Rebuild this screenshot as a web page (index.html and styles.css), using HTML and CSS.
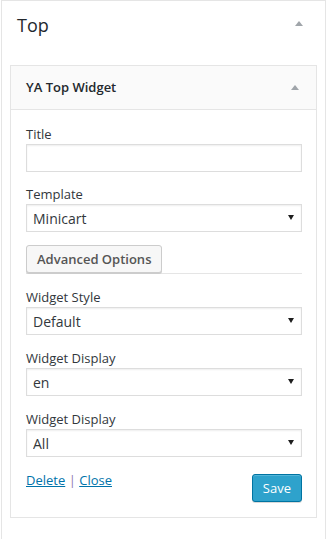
FILE: index.html
```
<!DOCTYPE html>
<html lang="en">
<head>
  <meta charset="UTF-8" />
  <title>Widgets | Top</title>
  <meta name="viewport" content="width=device-width, initial-scale=1.0" />
  <link rel="stylesheet" href="styles.css">
</head>
<body>

  <!-- Sidebar area -->
  <div class="sidebar">
    <div class="sidebar-head">
      <h2>Top</h2>
      <span class="toggle"></span>
    </div>

    <!-- Widget -->
    <div class="widget">
      <div class="widget-top">
        <h3>YA Top Widget</h3>
        <span class="toggle"></span>
      </div>

      <div class="widget-inside">
        <div class="field">
          <label for="title">Title</label>
          <input type="text" id="title" />
        </div>

        <div class="field">
          <label for="template">Template</label>
          <div class="select-wrap">
            <select id="template">
              <option>Minicart</option>
            </select>
          </div>
        </div>

        <div class="advanced">
          <button class="button">Advanced Options</button>
        </div>

        <div class="field">
          <label for="style">Widget Style</label>
          <div class="select-wrap">
            <select id="style">
              <option>Default</option>
            </select>
          </div>
        </div>

        <div class="field">
          <label for="lang">Widget Display</label>
          <div class="select-wrap">
            <select id="lang">
              <option>en</option>
            </select>
          </div>
        </div>

        <div class="field">
          <label for="display">Widget Display</label>
          <div class="select-wrap">
            <select id="display">
              <option>All</option>
            </select>
          </div>
        </div>

        <div class="actions">
          <div class="links">
            <a href="#">Delete</a> <span class="sep">|</span> <a href="#">Close</a>
          </div>
          <button class="button-primary">Save</button>
        </div>
      </div>
    </div>
  </div>

</body>
</html>
```

FILE: styles.css
```
* {
  margin: 0;
  padding: 0;
  box-sizing: border-box;
  font-family: 'Open Sans', 'Liberation Sans', sans-serif;
}

body {
  background: #fff;
  color: #23282d;
}

.sidebar {
  width: 325px;
  min-height: 539px;
  margin-left: 1px;
  border: 1px solid #e5e5e5;
  border-bottom: none;
  padding: 12px 8px 0;
  background: #fff;
}

.sidebar-head {
  display: flex;
  justify-content: space-between;
  padding: 0 14px 0 7px;
}

.sidebar-head h2 {
  font-size: 18px;
  line-height: 24px;
  font-weight: 400;
  color: #23282d;
}

.sidebar-head .toggle {
  margin-top: 8px;
}

.toggle {
  width: 0;
  height: 0;
  border-left: 4px solid transparent;
  border-right: 4px solid transparent;
  border-bottom: 5px solid #a0a5aa;
}

.widget {
  margin-top: 28px;
  border: 1px solid #e5e5e5;
  background: #fff;
}

.widget-top {
  display: flex;
  justify-content: space-between;
  align-items: center;
  padding: 12px 17px 13px 15px;
  background: #fafafa;
  border-bottom: 1px solid #e5e5e5;
}

.widget-top h3 {
  font-size: 13px;
  line-height: 18px;
  font-weight: 600;
  color: #23282d;
}

.widget-inside {
  padding: 15px 14px 15px 15px;
}

.field {
  margin-bottom: 13px;
}

.advanced ~ .field {
  margin-bottom: 14px;
}

.field label {
  display: block;
  font-size: 13px;
  line-height: 18px;
  margin-bottom: 1px;
  color: #32373c;
}

.field input,
.field select {
  display: block;
  width: 100%;
  height: 28px;
  padding: 0 6px;
  border: 1px solid #ddd;
  border-radius: 0;
  background: #fff;
  box-shadow: inset 0 1px 2px rgba(0, 0, 0, 0.07);
  font-size: 14px;
  color: #32373c;
  -webkit-appearance: none;
  appearance: none;
  outline: none;
}

.select-wrap {
  position: relative;
}

.select-wrap::after {
  content: "";
  position: absolute;
  right: 8px;
  top: 11px;
  border-left: 3px solid transparent;
  border-right: 3px solid transparent;
  border-top: 5px solid #1e1e1e;
}

.advanced {
  display: flex;
  border-bottom: 1px solid #e5e5e5;
  margin-bottom: 14px;
}

.button {
  height: 28px;
  padding: 0 10px;
  border: 1px solid #ccc;
  border-radius: 3px;
  background: #f7f7f7;
  box-shadow: 0 1px 0 #ccc;
  font-size: 13px;
  font-weight: 600;
  color: #555;
  cursor: pointer;
}

.actions {
  display: flex;
  justify-content: space-between;
  align-items: flex-start;
  margin-top: 12px;
}

.links {
  font-size: 13px;
  line-height: 18px;
}

.links a {
  color: #0073aa;
  text-decoration: underline;
}

.links .sep {
  color: #8e7cb0;
}

.button-primary {
  height: 28px;
  margin-top: 3px;
  padding: 0 10px;
  border: 1px solid #0074a2;
  border-radius: 3px;
  background: #2ea2cc;
  box-shadow: inset 0 1px 0 rgba(120, 200, 230, 0.5), 0 1px 0 rgba(0, 0, 0, 0.15);
  color: #fff;
  font-size: 13px;
  cursor: pointer;
}
```
